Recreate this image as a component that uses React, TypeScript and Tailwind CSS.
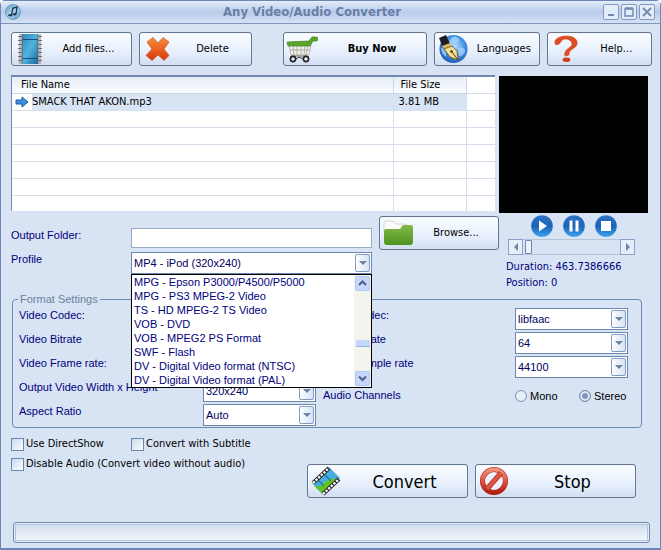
import { useState } from "react";
import type { ReactNode } from "react";

const UI = "font-['DejaVu_Sans_Condensed','DejaVu_Sans',sans-serif]";
const FORM = "font-['Liberation_Sans',Arial,sans-serif]";

function AppIcon() {
  return (
    <svg width="16" height="16" viewBox="0 0 16 16" aria-hidden="true">
      <defs>
        <linearGradient id="icon-app" x1="0" y1="0" x2="1" y2="1">
          <stop offset="0" stopColor="#4b93c4" />
          <stop offset="0.5" stopColor="#b7dcf0" />
          <stop offset="1" stopColor="#3d8cc0" />
        </linearGradient>
      </defs>
      <circle cx="8" cy="8" r="7.5" fill="url(#icon-app)" stroke="#6c9cc4" />
      <path d="M6.500 11 8 4l4-1-1 7" fill="none" stroke="#1f3a57" strokeWidth="1.400" />
      <ellipse cx="5.200" cy="11.200" rx="2" ry="1.300" fill="#1f3a57" />
      <ellipse cx="9.600" cy="10.200" rx="1.600" ry="1.200" fill="#1f3a57" />
    </svg>
  );
}

function FilmIcon() {
  return (
    <svg width="26" height="30" viewBox="0 0 26 30" aria-hidden="true">
      <defs>
        <linearGradient id="icon-film" x1="0" y1="0" x2="1" y2="1">
          <stop offset="0" stopColor="#2e86b8" />
          <stop offset="0.5" stopColor="#4fb4dc" />
          <stop offset="1" stopColor="#1565a0" />
        </linearGradient>
      </defs>
      <path d="M3 0V30M23 0V30" stroke="#8b7a72" />
      <path d="M1 2.500h24M1 6.500h24M1 10.500h24M1 14.500h24M1 18.500h24M1 22.500h24M1 26.500h24" stroke="#7d6a60" />
      <rect x="5" y="0" width="16" height="30" fill="url(#icon-film)" />
      <path d="M5 5.500h16M5 24.500h16" stroke="#164d7c" />
      <path d="M5 0v30M21 0v30" stroke="#5a5f70" />
    </svg>
  );
}

function CrossIcon() {
  return (
    <svg width="26" height="26" viewBox="0 0 26 26" aria-hidden="true">
      <defs>
        <linearGradient id="icon-cross" x1="0" y1="0" x2="0" y2="1">
          <stop offset="0" stopColor="#f5913c" />
          <stop offset="0.6" stopColor="#e8581c" />
          <stop offset="1" stopColor="#c93b10" />
        </linearGradient>
      </defs>
      <path d="M2 6 8 1.500l5 5.500 5-5.500 6 4.500-5 7 5 6.500-5 5-6-5.500-6 5.500-6-5L7 13z" fill="url(#icon-cross)" stroke="#d55a20" strokeWidth="0.8" strokeLinejoin="round" />
    </svg>
  );
}

function CartIcon() {
  return (
    <svg width="32" height="27" viewBox="0 0 32 27" aria-hidden="true">
      <path d="M3 9h22l-2 10H5z" fill="#f1f1ec" stroke="#b9b9b0" />
      <path d="M7 9l1 10M11 9v10M15 9v10M19 9l-1 10M22 9l-2 10M4 14h20" stroke="#b0b0a8" fill="none" />
      <path d="M1 6l22-1 3-4h4a2 2 0 0 1 0 4h-3l-3 5H2z" fill="#5aa52a" stroke="#3f8420" strokeWidth="0.7" />
      <path d="M5 20h16" stroke="#777" />
      <circle cx="7" cy="23" r="2.600" fill="#eee" stroke="#222" strokeWidth="1.600" />
      <circle cx="20" cy="23" r="2.600" fill="#eee" stroke="#222" strokeWidth="1.600" />
      <path d="m10 23 3-2 4 2" stroke="#333" fill="none" />
    </svg>
  );
}

function GlobePenIcon() {
  return (
    <svg width="30" height="30" viewBox="0 0 30 30" aria-hidden="true">
      <defs>
        <radialGradient id="icon-globe" cx="0.55" cy="0.4" r="0.65">
          <stop offset="0" stopColor="#b4dcff" />
          <stop offset="0.5" stopColor="#4a97e6" />
          <stop offset="1" stopColor="#1554ac" />
        </radialGradient>
      </defs>
      <circle cx="15.500" cy="15" r="14" fill="url(#icon-globe)" />
      <path d="M14 3c4-1 8 1 7 4s-5 1-7 4l-3-2zM20 15c4-3 7-1 7 2s-4 6-6 5zM3 14c3 0 6 4 5 9-3-2-5-5-5-9z" fill="#a9d6fb" opacity="0.75" />
      <path d="M1 4 8 1l4 9-7 4z" fill="#1d1d22" />
      <path d="m4 12 8-3 1 3-7 3z" fill="#d9b95a" />
      <path d="m6 15 8-3 5 5 1 9-8-3z" fill="#f3dc93" stroke="#6f5a22" strokeWidth="0.9" />
      <path d="m20 26-6-8" stroke="#44371a" />
      <circle cx="13.500" cy="17.500" r="1.300" fill="#44371a" />
    </svg>
  );
}

function QuestionIcon() {
  return (
    <svg width="26" height="28" viewBox="0 0 26 28" aria-hidden="true">
      <path d="M2 8C1 4 7 1 13 1c7 0 12 3 11 8-1 5-9 5-8 11l-4 1c-2-7 7-8 7-12 0-3-3-5-7-5-3 0-4 3-6 5-2 1-4 1-4-1z" fill="#e04d22" stroke="#c93b14" strokeWidth="0.6" />
      <ellipse cx="13.500" cy="24.800" rx="3.800" ry="2.200" fill="#cf3c17" />
    </svg>
  );
}

function FolderIcon() {
  return (
    <svg width="31" height="26" viewBox="0 0 31 26" aria-hidden="true">
      <defs>
        <linearGradient id="icon-folder" x1="0" y1="0" x2="0" y2="1">
          <stop offset="0" stopColor="#84b94a" />
          <stop offset="1" stopColor="#4f9320" />
        </linearGradient>
      </defs>
      <path d="M1 11V3q0-2 2-2h7l3 3h9q2 0 2 2v5z" fill="#fafbfa" stroke="#d2d7d2" />
      <path d="M1 11q0-2 2-2h14l3-4h8q2 0 2 2v15q0 3-3 3H4q-3 0-3-3z" fill="url(#icon-folder)" />
    </svg>
  );
}

function ConvertIcon() {
  return (
    <svg width="30" height="30" viewBox="0 0 30 30" aria-hidden="true">
      <path d="M1 17 18 1l11 11-17 17z" fill="#45aede" />
      <path d="M3 20q5 2 10-3t11-4l3 1-15 14z" fill="#62c322" />
      <path d="m6 13 7 7M12 7l8 8" stroke="#1d73a5" strokeWidth="1.200" />
      <path d="M2 17 18 2M12 28 28 13" stroke="#222" strokeWidth="4" />
      <path d="M2 17 18 2M12 28 28 13" stroke="#f4f4f4" strokeWidth="2.400" strokeDasharray="2.400 1.200" />
    </svg>
  );
}

function StopSignIcon() {
  return (
    <svg width="30" height="30" viewBox="0 0 30 30" aria-hidden="true">
      <defs>
        <linearGradient id="icon-stop" x1="0" y1="0" x2="0" y2="1">
          <stop offset="0" stopColor="#f0907c" />
          <stop offset="0.5" stopColor="#de5340" />
          <stop offset="1" stopColor="#b5200f" />
        </linearGradient>
      </defs>
      <circle cx="15" cy="15" r="11.500" fill="#eef2fa" stroke="#a8281a" strokeWidth="5" />
      <circle cx="15" cy="15" r="11.500" fill="none" stroke="url(#icon-stop)" strokeWidth="4" />
      <path d="M8 23 22 7" stroke="#a8281a" strokeWidth="5" />
      <path d="M8 23 22 7" stroke="#dd5442" strokeWidth="4" />
    </svg>
  );
}

function MediaIcon({ kind }: { kind: "play" | "pause" | "stop" }) {
  return (
    <svg width="22" height="22" viewBox="0 0 22 22" aria-hidden="true">
      <defs>
        <linearGradient id={"media-" + kind} x1="0" y1="0" x2="0" y2="1">
          <stop offset="0" stopColor="#2f74c4" />
          <stop offset="0.5" stopColor="#1c63bb" />
          <stop offset="1" stopColor="#3fa0e8" />
        </linearGradient>
      </defs>
      <circle cx="11" cy="11" r="10.800" fill={"url(#media-" + kind + ")"} />
      {kind === "play" && <path d="M8 5.500 16 11l-8 5.500z" fill="#fff" />}
      {kind === "pause" && <path d="M6.500 5.500h3v11h-3zM12.500 5.500h3v11h-3z" fill="#fff" />}
      {kind === "stop" && <path d="M6 6h10v10H6z" fill="#fff" />}
    </svg>
  );
}

function Triangle({ dir }: { dir: "down" | "left" | "right" }) {
  const path = { down: "M0 2h8L4 6z", left: "M6 0v8L2 4z", right: "M2 0v8l4-4z" }[dir];
  return (
    <svg width="8" height="8" viewBox="0 0 8 8" aria-hidden="true">
      <path d={path} fill="#6d83a6" />
    </svg>
  );
}

function SkinButton({ icon, className, children }: { icon: ReactNode; className: string; children: ReactNode }) {
  return (
    <button
      type="button"
      className={
        "flex h-[34px] items-center rounded-[3px] border border-[#64748b] bg-linear-to-b from-[#fbfeff] from-0% via-[#e9f1fd] via-50% to-[#e4eefa] pl-[2px] text-black shadow-[inset_0_-14px_10px_-8px_#d3ddf2,inset_0_0_0_1px_#f4f9ff] " +
        className
      }
    >
      <span className="flex w-8 shrink-0 justify-center">{icon}</span>
      <span className="flex-1 text-center whitespace-nowrap">{children}</span>
    </button>
  );
}

function Combo({ id, value, className }: { id: string; value?: string; className: string }) {
  return (
    <div className={"relative h-[22px] " + className}>
      <select
        id={id}
        className="h-full w-full appearance-none border border-[#6b87ad] bg-white pr-5 pl-[2px] text-[11px] text-[#00005c] outline-none"
      >
        {value && <option>{value}</option>}
      </select>
      <span className="pointer-events-none absolute top-[2px] right-[2px] flex h-[18px] w-[15px] items-center justify-center rounded-[2px] border border-[#7f9cc4] bg-linear-to-r from-white to-[#d6e2f5]">
        <Triangle dir="down" />
      </span>
    </div>
  );
}

function Check({ label }: { label: string }) {
  return (
    <label className="flex h-[13px] items-center gap-[2px] text-[11px] whitespace-nowrap text-black">
      <input
        type="checkbox"
        className="size-[13px] appearance-none border border-[#6b87ad] bg-linear-to-br from-[#c9d7ee] to-white checked:bg-[#3d63a0]"
      />
      {label}
    </label>
  );
}

function Radio({ label, checked, onChange }: { label: string; checked: boolean; onChange: () => void }) {
  return (
    <label className="flex w-16 shrink-0 items-center gap-[3px] text-[11px] text-black">
      <input
        type="radio"
        name="channels"
        checked={checked}
        onChange={onChange}
        className="size-3 shrink-0 appearance-none rounded-full border border-[#7890b4] bg-[#e6eefa] checked:bg-[#7f97bb] checked:shadow-[inset_0_0_0_2px_#dfe9f7]"
      />
      {label}
    </label>
  );
}

const profiles = [
  "MPG - Epson P3000/P4500/P5000",
  "MPG - PS3 MPEG-2 Video",
  "TS - HD MPEG-2 TS Video",
  "VOB - DVD",
  "VOB - MPEG2 PS Format",
  "SWF - Flash",
  "DV - Digital Video format (NTSC)",
  "DV - Digital Video format (PAL)",
];

const videoSettings = [
  { id: "video-codec", label: "Video Codec:" },
  { id: "video-bitrate", label: "Video Bitrate" },
  { id: "frame-rate", label: "Video Frame rate:" },
  { id: "video-size", label: "Output Video Width x Height", value: "320x240" },
  { id: "aspect", label: "Aspect Ratio", value: "Auto" },
];

const audioSettings = [
  { id: "audio-codec", label: "Audio Codec:", value: "libfaac" },
  { id: "audio-bitrate", label: "Audio Bitrate", value: "64" },
  { id: "sample-rate", label: "Audio Sample rate", value: "44100" },
];

const emptyRows = [1, 2, 3, 4, 5];

function SettingRow({ id, label, value }: { id: string; label: string; value?: string }) {
  return (
    <div className="flex">
      <label htmlFor={id} className="h-[14px] flex-1 leading-[14px] whitespace-nowrap">
        {label}
      </label>
      <Combo id={id} value={value} className="w-[113px]" />
    </div>
  );
}

function ScrollButton({ up }: { up?: boolean }) {
  return (
    <button
      type="button"
      aria-label={up ? "Scroll up" : "Scroll down"}
      className="flex h-[15px] w-[15px] items-center justify-center rounded-[2px] border border-[#b4c8f6] bg-[#c6d6fc]"
    >
      <svg width="9" height="7" viewBox="0 0 9 7" aria-hidden="true">
        <path d={up ? "m1 5 3.500-3.500L8 5" : "m1 1.500 3.500 3.500L8 1.500"} fill="none" stroke="#4d6185" strokeWidth="2" />
      </svg>
    </button>
  );
}

export default function App() {
  const [channels, setChannels] = useState("Stereo");
  return (
    <div className={"flex min-h-screen flex-col rounded-t-[5px] border-x border-t border-b-2 border-[#6d86b8] bg-[#d8e4f4] " + UI}>
      <header className="flex h-[23px] items-center border-b border-[#8093b8] bg-linear-to-b from-[#e3edfb] via-[#b9cbea] to-[#d5e2f5] pr-[5px] pl-1">
        <AppIcon />
        <h1 className="flex-1 text-center text-[13px] font-bold text-[#687fa8]">Any Video/Audio Converter</h1>
        <div className="flex gap-[2px]">
          {["Minimize", "Maximize", "Close"].map((name) => (
            <button
              key={name}
              type="button"
              aria-label={name}
              className="flex size-4 items-center justify-center rounded-[2px] border border-[#8499bf] bg-[#e3ecf9]"
            >
              <svg width="12" height="12" viewBox="0 0 12 12" fill="none" stroke="#7288ae" aria-hidden="true">
                {name === "Minimize" && <path d="M3 9h6" strokeWidth="2" />}
                {name === "Maximize" && <path d="M2 3h8v7H2zM2 2h8" strokeWidth="1.400" />}
                {name === "Close" && <path d="m2 2 8 8M10 2l-8 8" strokeWidth="1.800" />}
              </svg>
            </button>
          ))}
        </div>
      </header>

      <main className="flex flex-1 flex-col pt-2 pr-2 pb-[5px] pl-[10px] text-[11px]">
        <nav className="flex gap-[7px]">
          <SkinButton className="flex-[121]" icon={<FilmIcon />}>Add files...</SkinButton>
          <SkinButton className="mr-6 flex-[113]" icon={<CrossIcon />}>Delete</SkinButton>
          <SkinButton className="flex-[145] font-bold" icon={<CartIcon />}>Buy Now</SkinButton>
          <SkinButton className="flex-[105]" icon={<GlobePenIcon />}>Languages</SkinButton>
          <SkinButton className="flex-[105]" icon={<QuestionIcon />}>Help...</SkinButton>
        </nav>

        <div className="mt-[9px] mr-1 flex">
          <div className="flex flex-1 flex-col">
            <div className="mr-1 h-[136px] border-t-2 border-l border-[#7288b0] bg-white">
              <table className="w-full table-fixed border-collapse text-left text-black">
                <thead>
                  <tr className="h-4 bg-linear-to-b from-[#e6eef8] to-[#fafcff]">
                    <th className="border-r border-b border-[#c9d6e6] p-0 pl-[9px] leading-[14px] font-normal">File Name</th>
                    <th className="w-[73px] border-r border-b border-[#c9d6e6] p-0 pl-[7px] leading-[14px] font-normal">File Size</th>
                    <th className="w-[29px] border-b border-[#d5e0ec] bg-white p-0" aria-label="Spare column" />
                  </tr>
                </thead>
                <tbody>
                  <tr className="h-[17px]">
                    <td className="border border-l-0 border-[#d5e0ec] bg-[#d8e4f4] p-0">
                      <span className="flex items-center">
                        <span className="flex h-4 w-5 items-center justify-center bg-white">
                          <svg width="14" height="12" viewBox="0 0 14 12" aria-hidden="true">
                            <path d="M1 4h6V1l6 5-6 5V8H1z" fill="#3e8ede" stroke="#1d5ca8" />
                          </svg>
                        </span>
                        SMACK THAT AKON.mp3
                      </span>
                    </td>
                    <td className="border border-[#d5e0ec] bg-[#d8e4f4] p-0 pl-[5px]">3.81 MB</td>
                    <td className="border border-r-0 border-[#d5e0ec] p-0" />
                  </tr>
                  {emptyRows.map((row) => (
                    <tr key={row} className="h-[17px]">
                      <td className="border-r border-b border-[#d5e0ec] p-0" />
                      <td className="border-r border-b border-[#d5e0ec] p-0" />
                      <td className="border-b border-[#d5e0ec] p-0" />
                    </tr>
                  ))}
                  <tr className="h-4">
                    <td className="border-r border-[#d5e0ec] p-0" />
                    <td className="border-r border-[#d5e0ec] p-0" />
                    <td className="p-0" />
                  </tr>
                </tbody>
              </table>
            </div>

            <div className="mt-[5px] flex gap-[7px]">
              <div className={"flex-1 text-[#00007c] " + FORM}>
                <div className="flex pt-3">
                  <label htmlFor="folder" className="w-[120px] leading-[14px]">Output Folder:</label>
                  <input id="folder" type="text" className="h-5 min-w-0 flex-1 border border-[#9aabc4] bg-white px-1 text-[11px] outline-none" />
                </div>
                <div className="mt-1 flex">
                  <label htmlFor="profile" className="w-[120px] leading-[14px]">Profile</label>
                  <div className="relative flex-1">
                    <Combo id="profile" value="MP4 - iPod (320x240)" className="w-full" />
                    <div className="absolute inset-x-0 top-[22px] z-10 flex h-[114px] border border-black bg-white">
                      <ul role="listbox" aria-label="Profiles" className="flex-1 overflow-hidden pl-[2px]">
                        {profiles.map((name) => (
                          <li key={name} role="option" aria-selected="false" className="h-[14px] leading-[14px] whitespace-nowrap">
                            {name}
                          </li>
                        ))}
                      </ul>
                      <div className="flex w-[17px] flex-col items-center justify-between bg-[#f4f4ef] py-px">
                        <ScrollButton up />
                        <span className="mt-6 h-[7px] w-[14px] rounded-[1px] border-b border-[#98b0e4] bg-[#c6d6fc]" />
                        <ScrollButton />
                      </div>
                    </div>
                  </div>
                </div>
              </div>
              <SkinButton className="w-[120px]" icon={<FolderIcon />}>Browse...</SkinButton>
            </div>
          </div>

          <aside className="w-[149px] pt-px text-[#00007c]">
            <div className="h-[137px] bg-black" />
            <div className="flex justify-center gap-[10px] pt-[2px]">
              <button type="button" aria-label="Play"><MediaIcon kind="play" /></button>
              <button type="button" aria-label="Pause"><MediaIcon kind="pause" /></button>
              <button type="button" aria-label="Stop playback"><MediaIcon kind="stop" /></button>
            </div>
            <div className="mt-[2px] mr-[13px] ml-[9px] flex h-4 border-y border-[#b3c4dd]">
              <button type="button" aria-label="Back" className="-my-px flex w-[15px] items-center justify-center border border-[#8aa0c4] bg-[#e6eefa]">
                <Triangle dir="left" />
              </button>
              <input
                type="range"
                aria-label="Position"
                defaultValue={0}
                className="mx-[2px] min-w-0 flex-1 appearance-none bg-transparent [&::-webkit-slider-thumb]:h-[14px] [&::-webkit-slider-thumb]:w-[7px] [&::-webkit-slider-thumb]:appearance-none [&::-webkit-slider-thumb]:rounded-[1px] [&::-webkit-slider-thumb]:border [&::-webkit-slider-thumb]:border-[#6d86b8] [&::-webkit-slider-thumb]:bg-[#eef4fc]"
              />
              <button type="button" aria-label="Forward" className="-my-px flex w-[15px] items-center justify-center border border-[#8aa0c4] bg-[#e6eefa]">
                <Triangle dir="right" />
              </button>
            </div>
            <div className="mt-1 pl-[7px] leading-4">
              <p>Duration: 463.7386666</p>
              <p>Position: 0</p>
            </div>
          </aside>
        </div>

        <fieldset className={"mt-px mr-[10px] ml-px flex gap-[7px] rounded-[4px] border border-[#6b87ad] pr-[13px] pb-px pl-[6px] text-[#00007c] " + FORM}>
          <legend className="-ml-px px-[2px] leading-[14px] text-[#6d7f9f]">Format Settings</legend>
          <div className="flex flex-[297] flex-col gap-[2px] pt-[2px]">
            {videoSettings.map((s) => (
              <SettingRow key={s.id} {...s} />
            ))}
          </div>
          <div className="flex flex-[305] flex-col gap-[2px] pt-[2px]">
            {audioSettings.map((s) => (
              <SettingRow key={s.id} {...s} />
            ))}
            <div className="flex pt-2" role="radiogroup" aria-labelledby="channels">
              <span id="channels" className="flex-1 leading-[14px]">Audio Channels</span>
              <div className="flex w-[113px]">
                {["Mono", "Stereo"].map((name) => (
                  <Radio key={name} label={name} checked={channels === name} onChange={() => setChannels(name)} />
                ))}
              </div>
            </div>
          </div>
        </fieldset>

        <div className="mr-4 flex justify-between pt-[10px]">
          <div className="flex flex-col gap-[7px]">
            <div className="grid grid-cols-[120px_auto]">
              <Check label="Use DirectShow" />
              <Check label="Convert with Subtitle" />
            </div>
            <Check label="Disable Audio (Convert video without audio)" />
          </div>
          <div className="flex gap-[7px] pt-[26px] text-[18px]">
            <SkinButton className="w-[161px]" icon={<ConvertIcon />}>Convert</SkinButton>
            <SkinButton className="w-[161px]" icon={<StopSignIcon />}>Stop</SkinButton>
          </div>
        </div>

        <div
          role="progressbar"
          aria-label="Conversion progress"
          aria-valuenow={0}
          className="mt-auto mr-[2px] ml-[2px] h-[21px] rounded-[3px] border border-[#7288b0] bg-linear-to-b from-[#cfdcef] to-[#f4f8fd] shadow-[inset_0_0_0_1px_#e4edf9,inset_0_0_0_2px_#b3c4dd]"
        />
      </main>
    </div>
  );
}
